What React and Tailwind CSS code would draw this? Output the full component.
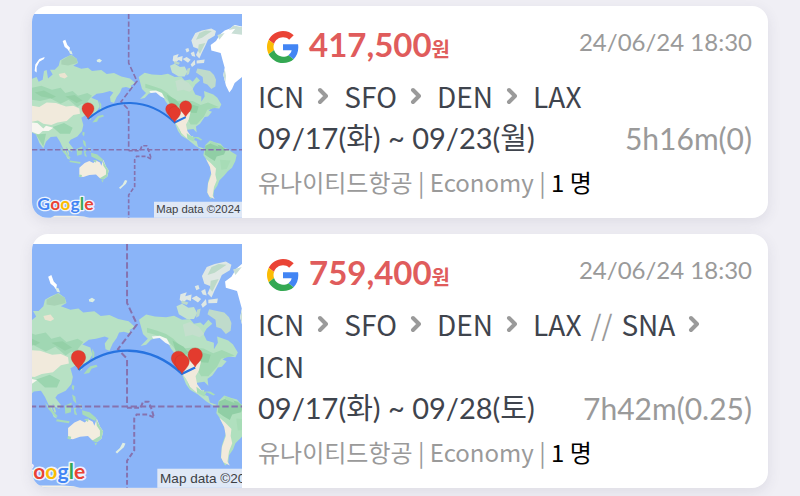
import React from "react";

const korean = "font-['Noto_Sans_CJK_KR','Noto_Sans',sans-serif]";
const latin = "font-['Lato','Noto_Sans_CJK_KR',sans-serif]";

const flights = [
  {
    price: "417,500",
    checked: "24/06/24 18:30",
    legs: [["ICN", "SFO", "DEN", "LAX"]],
    dates: "09/17(화) ~ 09/23(월)",
    duration: "5h16m(0)",
  },
  {
    price: "759,400",
    checked: "24/06/24 18:30",
    legs: [["ICN", "SFO", "DEN", "LAX"], ["SNA", "ICN"]],
    dates: "09/17(화) ~ 09/28(토)",
    duration: "7h42m(0.25)",
  },
];

function GoogleMark() {
  return (
    <svg viewBox="0 0 48 48" className="h-8 w-8 shrink-0" role="img" aria-label="Google">
      <path fill="#ea4335" d="M24 9.5c3.54 0 6.71 1.22 9.21 3.6l6.85-6.85C35.9 2.38 30.47 0 24 0 14.62 0 6.51 5.38 2.56 13.22l7.98 6.19C12.43 13.72 17.74 9.5 24 9.5z" />
      <path fill="#4285f4" d="M46.98 24.55c0-1.57-.15-3.09-.38-4.55H24v9.02h12.94c-.58 2.96-2.26 5.48-4.78 7.18l7.73 6c4.51-4.18 7.09-10.36 7.09-17.65z" />
      <path fill="#fbbc05" d="M10.53 28.59c-.48-1.45-.76-2.99-.76-4.59s.27-3.14.76-4.59l-7.98-6.19C.92 16.46 0 20.12 0 24c0 3.88.92 7.54 2.56 10.78l7.97-6.19z" />
      <path fill="#34a853" d="M24 48c6.48 0 11.93-2.13 15.89-5.81l-7.73-6c-2.15 1.45-4.92 2.3-8.16 2.3-6.26 0-11.57-4.22-13.47-9.91l-7.98 6.19C6.51 42.62 14.62 48 24 48z" />
    </svg>
  );
}

function Chevron() {
  return (
    <svg viewBox="0 0 12 18" className="ml-3 mr-4 h-[18px] w-3 shrink-0" fill="none" stroke="#9a9a9a" strokeWidth="4" strokeLinecap="round" strokeLinejoin="round" aria-hidden="true">
      <path d="M4 3l6 6-6 6" />
    </svg>
  );
}

function Pin({ x, y }) {
  return (
    <path
      transform={`translate(${x} ${y})`}
      fill="#e33b2e"
      stroke="#c5342b"
      strokeWidth="1"
      d="M0 0C-3-8-18-18-18-31A18 17 0 0 1 18-31C18-18 3-8 0 0z"
    />
  );
}

function RouteMap() {
  return (
    <svg viewBox="24 42 630 612" preserveAspectRatio="xMidYMid slice" className="block min-h-0 w-full flex-[96] basis-0" role="img" aria-label="Route map">
      <rect x="-50" y="42" width="800" height="612" fill="#8ab4f8" />

      {/* Asia */}
      <path fill="#b7e1c4" d="M24 237L38 232 44 246 56 240 60 214 68 211 72 236 86 224 78 210 92 210 104 198 108 182 122 174 142 165 158 177 162 190 148 198 172 207 192 204 204 214 232 211 248 223 270 220 292 230 318 236 334 250 320 258 326 268 306 262 294 264 288 278 278 292 270 310 260 306 258 292 268 278 258 274 236 280 218 282 202 294 222 302 227 320 216 338 202 344 201 359 194 359 186 346 172 354 178 376 174 394 160 410 140 420 134 428 148 446 144 456 132 450 128 442 126 456 138 480 130 476 120 452 108 426 98 410 80 412 66 426 58 446 46 430 36 404 24 398z" />
      <path fill="#a0d7b3" d="M24 264L52 258 84 270 110 264 124 280 146 274 162 288 190 280 204 288 190 306 198 318 174 312 160 322 134 300 110 312 80 296 48 304 24 300z" />
      <path fill="#94d0a7" d="M32 278L60 272 96 290 84 296 52 290zM124 290L152 286 176 302 158 310z" />
      <path fill="#a8d3b5" d="M112 182L140 166 158 177 160 190 132 197 112 194z" />
      <path fill="#f1eadc" d="M24 318L46 322 68 308 96 310 126 320 148 318 166 326 168 342 148 346 128 364 100 368 82 376 58 372 42 362 24 366z" />
      <path fill="#ebe4d1" d="M104 223L122 219 131 230 122 236 108 232z" />
      <path fill="#f8f6f0" d="M24 368L40 370 58 386 66 378 88 384 74 394 56 394 44 404 24 396z" />
      <path fill="#9bd5af" d="M86 382L120 370 146 384 138 402 108 402zM36 404L66 402 58 440z" />
      <path fill="#fff" d="M32 214L34 194 46 178 62 172 60 178 46 186 38 202 38 218zM116 124L124 120 130 136 138 144 136 156 130 148 122 142z" />
      <path fill="#dceee3" d="M134 152l8 1 4 11-8-2zM218 181l8-4 8 5-6 6-9-2z" />
      <path fill="#a8dbb8" d="M226 304l6 10-1 24-4-12zM222 349l15-4 3 5-15 5-6 11-14 2 10-12zM176 396l6 2-2 12-5-6zM176 420l8 5 3 18-8-8zM108 440l14 14 18 20-5 3-18-20zM138 482l32 5-2 5-32-5zM158 448l17-8-2 24-14 4zM180 454l10-3-6 7 5 14-7-3zM201 459l19 5 17 15-3 7-18-9-14-7z" />
      <path fill="#b9e1b8" d="M126 446l5 1 5 17-4 1zM192 444l8 2 1 10-6-3z" />

      {/* Australia and New Zealand */}
      <path fill="#f3eddf" d="M166 504L182 490 196 484 208 490 216 482 228 488 232 498 238 480 246 500 254 512 250 530 240 538 226 534 216 524 196 526 178 532 166 530z" />
      <path fill="#a8dbb8" d="M236 480L246 500 254 512 250 530 238 540 226 536 246 524 246 510 238 498zM166 524l8 2-2 7-8-3zM232 541l7 1-4 6zM206 482l12-2-2 9z" />
      <path fill="#e0eee2" d="M303 541l7 2-4 9-10 9-7 7-4-4 11-10z" />

      {/* North America */}
      <path fill="#b7e1c4" d="M348 246L344 232 362 219 384 224 412 226 432 222 452 232 472 230 482 242 498 239 506 246 518 232 528 242 514 254 506 268 514 284 532 290 532 306 542 290 540 274 556 280 568 284 580 294 592 314 586 326 566 324 554 332 564 336 552 350 542 352 528 372 516 380 518 398 508 388 490 390 486 404 498 410 508 408 506 420 518 424 522 440 540 446 534 450 514 438 492 420 472 408 462 394 452 368 440 348 436 320 424 304 414 284 394 275 374 282 362 295 348 298 366 280 354 268z" />
      <path fill="#c4dfcd" d="M454 244L472 238 494 250 508 268 496 276 478 270 460 274z" />
      <path fill="#a2d9b3" d="M364 252L390 260 412 268 430 280 454 304 480 302 506 304 530 316 552 308 584 322 550 330 540 350 518 374 500 374 486 350 454 334 430 300 412 280 384 270 364 264z" />
      <path fill="#91d0a4" d="M428 284L456 300 468 314 450 330 436 310zM486 310L524 320 518 340 492 338z" />
      <path fill="#f1eadc" d="M446 344L468 336 500 336 494 360 486 374 490 394 500 408 506 420 490 416 472 400 462 380 450 364z" />
      <path fill="#f4f7f3" d="M376 274L396 272 414 280 422 296 410 290 396 278 380 280z" />
      <path fill="#a7ddb8" d="M464 384l6 13 6 14-7-10zM488 400l16 12 10 1-6 12-18-9zM510 412h13l12 8-4 2z" />

      {/* Arctic islands and Greenland */}
      <path fill="#c4e3ce" d="M438 198L452 192 468 202 482 200 490 216 482 230 464 230 444 218z" />
      <path fill="#bfdbcb" d="M516 218L520 206 540 210 558 214 570 226 576 240 574 260 562 268 550 254 538 250 536 232z" />
      <path fill="#dfe8e4" d="M502 122L514 100 534 92 562 86 576 94 572 108 552 120 544 138 534 158 526 176 516 166 524 148 508 142zM448 168l16-5-4 10 16-4-2 16-10-4-10 8-8-7zM476 178l12-6 12 8-8 9zM484 148l9-3 3 9-8 4zM500 160l10-5 4 16-10-2zM500 194l12-14 2 14-10 8zM518 182l24-3-2 11-22 1z" />
      <path fill="#bddac9" d="M526 100l18-8 20 2-30 20-18 6zM524 134l20-4-16 32-6-8zM452 184l16 5-4 6-14-4zM490 207l9-3-4 19-8 4z" />
      <path fill="#fff" d="M654 80L632 76 618 86 602 92 588 104 576 124 560 136 562 152 590 160 596 182 602 204 598 226 606 258 616 278 624 268 632 250 654 232 750 200 750 80z" />
      <path fill="#c9dfd6" d="M654 82l-26-5-14 14 20-4-12 14 32 4zM602 100l-22 6 6 14zM602 208l-4 18 6 22 2-20z" />

      {/* South America */}
      <path fill="#b0e0be" d="M544 436L558 422 574 428 590 432 600 444 612 448 622 456 638 466 634 484 624 504 612 514 600 528 586 542 580 558 570 572 568 592 560 598 550 578 552 548 562 518 558 500 546 478 538 466z" />
      <path fill="#90cea5" d="M544 438L562 430 592 438 606 450 600 464 578 470 572 484 556 474 542 464z" />
      <path fill="#a7dcb6" d="M558 424l22 7 4 10-22-8zM588 480l32 2-12 26-16 2z" />
      <path fill="#f1eadc" d="M546 478L560 490 576 506 574 524 578 542 570 562 566 588 572 598 556 590 550 578 552 552 562 524 558 502z" />
      <path fill="#f4efe5" d="M80 654L92 648 152 648 180 650 196 654z" />

      {/* Equator and date line */}
      <g fill="none" stroke="#8672ae" strokeWidth="5" strokeDasharray="16 7">
        <path d="M24 450H654" />
        <path d="M314 42V190L339 244 291 306 314 330V452" />
      </g>
      <path fill="none" stroke="#8672ae" strokeWidth="5" strokeDasharray="12 6" d="M314 453H348L354 438 368 438 374 452 382 478 366 470H338L332 480V560L314 586V654" />

      {/* Flight path */}
      <path fill="none" stroke="#2773e0" strokeWidth="6" d="M192 358C266 292 372 292 452 368L485 352" />
      <Pin x={192} y={357} />
      <Pin x={443} y={359} />
      <Pin x={485} y={351} />
      <Pin x={452} y={368} />

      <text x="40" y="632" fontSize="53" fontWeight="700" className="font-['Lato',sans-serif]" stroke="#fff" strokeOpacity="0.85" strokeWidth="8" strokeLinejoin="round" paintOrder="stroke">
        <tspan fill="#4285f4">G</tspan>
        <tspan fill="#ea4335">o</tspan>
        <tspan fill="#fbbc05">o</tspan>
        <tspan fill="#4285f4">g</tspan>
        <tspan fill="#34a853">l</tspan>
        <tspan fill="#ea4335">e</tspan>
      </text>
      <rect x="390" y="606" width="264" height="48" fill="#dfe8f6" />
      <text x="397" y="641" fontSize="34" fill="#3c4043" className="font-['Liberation_Sans',sans-serif]">
        Map data ©2024
      </text>
    </svg>
  );
}

function Route({ legs }) {
  return (
    <div className={`flex flex-wrap items-center text-[28px] leading-[42px] text-[#3f444d] ${korean}`}>
      {legs.map((stops, legIndex) => (
        <React.Fragment key={legIndex}>
          {legIndex > 0 && <span className="mx-[9px] text-[#9a9a9a]">//</span>}
          {stops.map((stop, index) => (
            <React.Fragment key={stop}>
              {index > 0 && <Chevron />}
              <span>{stop}</span>
            </React.Fragment>
          ))}
        </React.Fragment>
      ))}
    </div>
  );
}

function FlightCard({ flight }) {
  return (
    <article className="flex overflow-hidden rounded-2xl bg-white shadow-[0_4px_14px_rgba(60,60,90,0.10)]">
      <div className="flex w-[210px] shrink-0 flex-col">
        <div className="flex-[4] basis-0" />
        <RouteMap />
      </div>
      <div className="min-w-0 flex-1 px-4 pb-3 pt-2">
        <div className="flex h-[61px] items-center justify-between pt-1">
          <div className="flex items-center gap-[10px] pl-[9px]">
            <GoogleMark />
            <h2 className={`text-[33px] font-bold leading-[48px] text-[#e05c5c] ${latin}`}>
              {flight.price}
              <span className="text-[20px]">원</span>
            </h2>
          </div>
          <time className={`self-start text-[24px] leading-[48px] text-[#9a9a9a] ${latin}`}>{flight.checked}</time>
        </div>
        <Route legs={flight.legs} />
        <div className={`flex justify-between text-[29px] leading-[42px] ${latin}`}>
          <span className="text-[#3f444d]">{flight.dates}</span>
          <span className="text-[30px] text-[#9a9a9a]">{flight.duration}</span>
        </div>
        <p className={`pb-px text-[24px] leading-[46px] text-[#9a9a9a] ${korean}`}>
          유나이티드항공 | Economy | <span className="text-black">1 명</span>
        </p>
      </div>
    </article>
  );
}

export default function App() {
  return (
    <main className="flex min-h-screen flex-col gap-4 bg-[#f0eff5] px-8 pb-2 pt-[6px]">
      {flights.map((flight) => (
        <FlightCard key={flight.price} flight={flight} />
      ))}
    </main>
  );
}
